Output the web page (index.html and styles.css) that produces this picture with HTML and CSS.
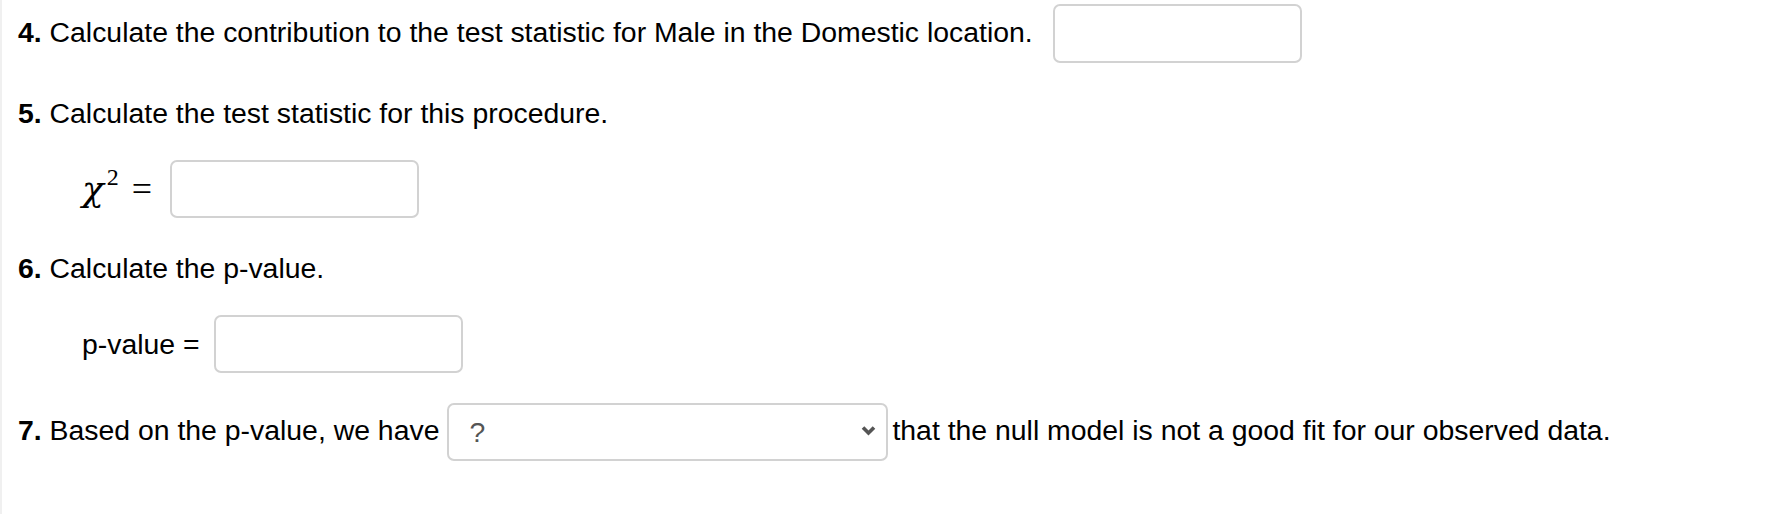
FILE: index.html
```html
<!DOCTYPE html>
<html>
<head>
<meta charset="utf-8">
<link rel="stylesheet" href="styles.css">
</head>
<body>
<div class="page">
  <div class="row row-q4">
    <span class="text"><b>4.</b> Calculate the contribution to the test statistic for Male in the Domestic location.</span>
    <input class="box box-q4" type="text">
  </div>

  <p class="line line-q5"><b>5.</b> Calculate the test statistic for this procedure.</p>

  <div class="row row-chi">
    <span class="math"><i class="chi">χ</i><sup class="sup">2</sup></span>
    <span class="eq">=</span>
    <input class="box" type="text">
  </div>

  <p class="line line-q6"><b>6.</b> Calculate the p-value.</p>

  <div class="row row-p">
    <span class="plabel">p-value =</span>
    <input class="box" type="text">
  </div>

  <div class="row row-q7">
    <span class="text"><b>7.</b> Based on the p-value, we have</span>
    <span class="select-wrap">
      <select class="select">
        <option>?</option>
      </select>
      <svg class="chev" width="15" height="11" viewBox="0 0 15 11"><path d="M2 2.5 L7.5 8 L13 2.5" fill="none" stroke="#555" stroke-width="3.6"/></svg>
    </span>
    <span class="text after">that the null model is not a good fit for our observed data.</span>
  </div>
</div>
</body>
</html>
```

FILE: styles.css
```css
html, body {
  margin: 0;
  padding: 0;
  background: #fff;
}
.page {
  box-sizing: border-box;
  min-height: 514px;
  border-left: 2px solid #f0f0f0;
  padding-left: 16px;
  padding-top: 4px;
  font-family: "Liberation Sans", Arial, sans-serif;
  font-size: 28.4px;
  line-height: 30px;
  color: #000;
}
.row {
  display: flex;
  align-items: center;
}
.text {
  padding-bottom: 4px;
  white-space: nowrap;
}
.box {
  box-sizing: border-box;
  width: 249px;
  height: 59px;
  border: 2px solid #d2d2d2;
  border-radius: 7px;
  background: #fff;
  margin: 0;
  padding: 0 12px;
  font: inherit;
  outline: none;
}
.row-q4 .box {
  margin-left: 20px;
}
.line {
  margin: 0;
}
.line-q5 {
  margin-top: 35px;
}
.row-chi {
  margin-top: 32px;
  padding-left: 64px;
}
.row-chi .box {
  height: 58px;
  margin-left: 18px;
}
.math {
  font-family: "DejaVu Serif", "Liberation Serif", serif;
  font-size: 36px;
  line-height: 30px;
}
.chi {
  font-style: italic;
}
.sup {
  font-family: "Liberation Serif", serif;
  font-size: 24px;
  vertical-align: 16px;
  line-height: 0;
  margin-left: 3px;
}
.eq {
  margin-left: 13px;
  font-family: "Liberation Serif", serif;
  font-size: 36px;
}
.line-q6 {
  margin-top: 35px;
}
.row-p {
  margin-top: 32px;
  padding-left: 64px;
}
.row-p .box {
  height: 58px;
  margin-left: 14px;
}
.row-q7 {
  margin-top: 30px;
}
.select-wrap {
  position: relative;
  display: inline-block;
  margin-left: 8px;
}
.select {
  -webkit-appearance: none;
  appearance: none;
  box-sizing: border-box;
  width: 441px;
  height: 58px;
  border: 2px solid #d2d2d2;
  border-radius: 7px;
  background: #fff;
  margin: 0;
  padding: 0 0 0 20px;
  font-family: "Liberation Sans", Arial, sans-serif;
  font-size: 28.4px;
  color: #555;
  display: block;
}
.chev {
  position: absolute;
  right: 12px;
  top: 22px;
}
.after {
  margin-left: 4px;
}
```
